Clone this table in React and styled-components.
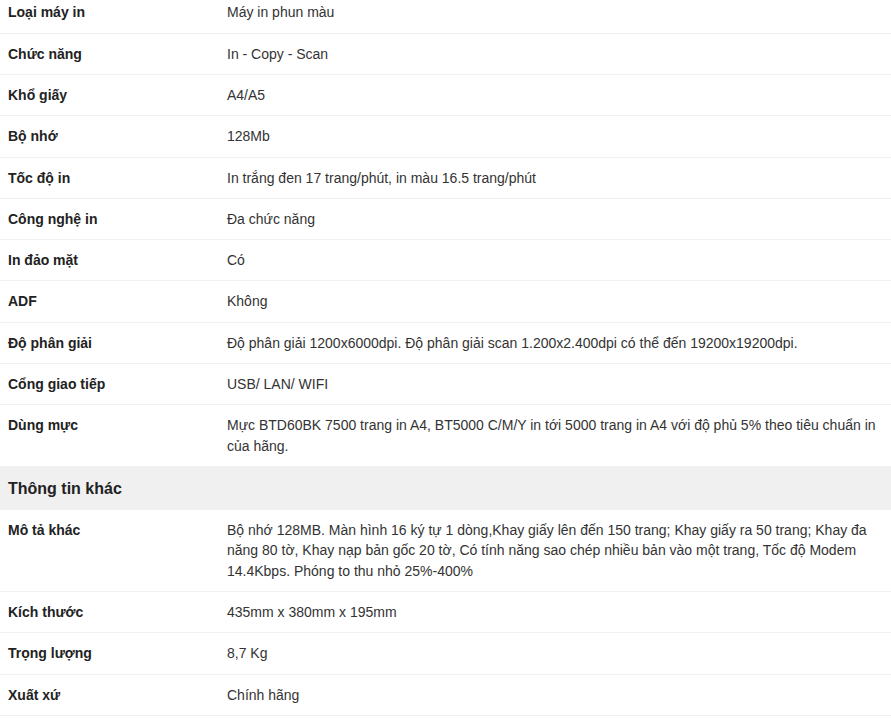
import React from 'react'
import styled, { createGlobalStyle } from 'styled-components'

const specs = [
  ['Loại máy in', 'Máy in phun màu'],
  ['Chức năng', 'In - Copy - Scan'],
  ['Khổ giấy', 'A4/A5'],
  ['Bộ nhớ', '128Mb'],
  ['Tốc độ in', 'In trắng đen 17 trang/phút, in màu 16.5 trang/phút'],
  ['Công nghệ in', 'Đa chức năng'],
  ['In đảo mặt', 'Có'],
  ['ADF', 'Không'],
  ['Độ phân giải', 'Độ phân giải 1200x6000dpi. Độ phân giải scan 1.200x2.400dpi có thể đến 19200x19200dpi.'],
  ['Cổng giao tiếp', 'USB/ LAN/ WIFI'],
  ['Dùng mực', 'Mực BTD60BK 7500 trang in A4, BT5000 C/M/Y in tới 5000 trang in A4 với độ phủ 5% theo tiêu chuẩn in của hãng.'],
]

const other = [
  ['Mô tả khác', 'Bộ nhớ 128MB. Màn hình 16 ký tự 1 dòng,Khay giấy lên đến 150 trang; Khay giấy ra 50 trang; Khay đa năng 80 tờ, Khay nạp bản gốc 20 tờ, Có tính năng sao chép nhiều bản vào một trang, Tốc độ Modem 14.4Kbps. Phóng to thu nhỏ 25%-400%'],
  ['Kích thước', '435mm x 380mm x 195mm'],
  ['Trọng lượng', '8,7 Kg'],
  ['Xuất xứ', 'Chính hãng'],
]

const GlobalStyle = createGlobalStyle`
  body {
    margin: 0;
    background: #fff;
    font-family: "Liberation Sans", Arial, sans-serif;
    overflow: hidden;
  }
`

const SpecTable = styled.div`
  margin-top: -7.6px;
  width: 891px;
`

const Row = styled.div`
  display: grid;
  grid-template-columns: 218px 1fr;
  border-bottom: 1px solid #f1f1f1;
`

const Label = styled.div`
  padding: 10px 8px;
  font-size: 14px;
  line-height: 20.3px;
  font-weight: 700;
  color: #222;
`

const Value = styled.div`
  padding: 10px 8px 10px 9px;
  font-size: 14px;
  line-height: 20.3px;
  color: #333;
`

const SectionHeader = styled.div`
  background: #f0f0f0;
  padding: 10px 8px;
  font-size: 16px;
  line-height: 23.2px;
  font-weight: 700;
  color: #222;
`

const SpecRow = ({ label, value }) => (
  <Row>
    <Label>{label}</Label>
    <Value>{value}</Value>
  </Row>
)

export default function App() {
  return (
    <>
      <GlobalStyle />
      <SpecTable>
        {specs.map(([l, v]) => <SpecRow key={l} label={l} value={v} />)}
        <SectionHeader>Thông tin khác</SectionHeader>
        {other.map(([l, v]) => <SpecRow key={l} label={l} value={v} />)}
      </SpecTable>
    </>
  )
}
